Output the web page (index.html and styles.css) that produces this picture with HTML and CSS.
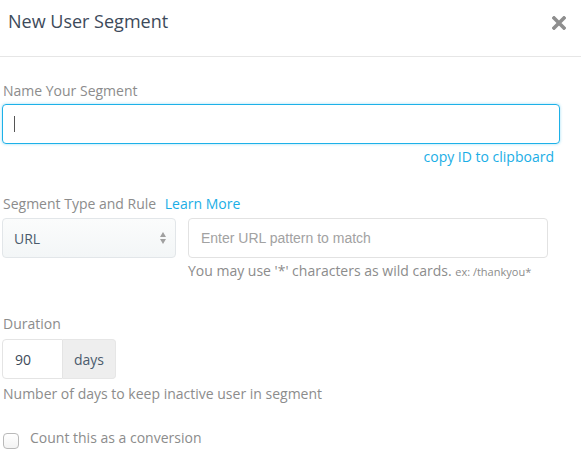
FILE: index.html
```html
<!DOCTYPE html>
<html lang="en">
<head>
<meta charset="utf-8">
<title>New User Segment</title>
<link rel="stylesheet" href="styles.css">
</head>
<body>
<div class="header">
  <h1 class="title">New User Segment</h1>
  <svg class="close" width="14" height="14" viewBox="0 0 14 14" aria-label="Close">
    <path d="M2 2 L12 12 M12 2 L2 12" stroke="#8e8e8e" stroke-width="3.6" stroke-linecap="square"/>
  </svg>
</div>
<div class="content">
  <div class="label">Name Your Segment</div>
  <div class="name-input"><span class="caret"></span></div>
  <div class="copy-row"><span class="link">copy ID to clipboard</span></div>

  <div class="label section">Segment Type and Rule <span class="link learn">Learn More</span></div>
  <div class="rule-row">
    <div class="select">
      <span class="select-value">URL</span>
      <span class="arrows"><span class="up"></span><span class="down"></span></span>
    </div>
    <div class="url-input">Enter URL pattern to match</div>
  </div>
  <div class="hint">You may use '*' characters as wild cards. <span class="ex">ex: /thankyou*</span></div>

  <div class="label duration">Duration</div>
  <div class="input-group">
    <div class="num">90</div>
    <div class="addon">days</div>
  </div>
  <div class="help">Number of days to keep inactive user in segment</div>

  <div class="check-row">
    <span class="checkbox"></span>
    <span class="check-label">Count this as a conversion</span>
  </div>
</div>
</body>
</html>
```
FILE: styles.css
```css
html, body {
  margin: 0;
  padding: 0;
  background: #ffffff;
}
body {
  font-family: "Open Sans", "Liberation Sans", sans-serif;
  color: #8c8c8c;
  width: 581px;
}
.header {
  height: 57px;
  box-sizing: border-box;
  border-bottom: 1px solid #e6e6e6;
  display: flex;
  justify-content: space-between;
  align-items: flex-start;
  padding: 9px 15px 0 8px;
}
.title {
  margin: 0;
  font-size: 18px;
  line-height: 24px;
  font-weight: 400;
  color: #3d4a5a;
}
.close {
  margin-top: 7px;
  display: block;
}
.content {
  padding: 24px 0 0 2px;
  width: 558px;
}
.label {
  font-size: 14px;
  line-height: 20px;
  color: #8c8c8c;
  padding-left: 1px;
  margin-bottom: 3px;
}
.link {
  color: #1aaee6;
}
.learn {
  margin-left: 5px;
}
.name-input {
  height: 40px;
  box-sizing: border-box;
  border: 1px solid #1db1e8;
  border-radius: 4px;
  box-shadow: 0 0 3px rgba(29, 177, 232, 0.45);
  position: relative;
}
.caret {
  position: absolute;
  left: 11px;
  top: 11px;
  width: 1px;
  height: 16px;
  background: #555;
}
.copy-row {
  text-align: right;
  padding-right: 6px;
  margin-top: 3px;
  font-size: 14px;
  line-height: 20px;
}
.section {
  margin-top: 27px;
  margin-bottom: 4px;
}
.rule-row {
  display: flex;
  gap: 12px;
}
.select {
  width: 174px;
  height: 40px;
  box-sizing: border-box;
  border: 1px solid #e2e6e9;
  border-radius: 4px;
  background: linear-gradient(#fbfcfc, #f3f6f7);
  display: flex;
  align-items: center;
  justify-content: space-between;
  padding: 0 9px 0 11px;
}
.select-value {
  font-size: 14px;
  color: #4b5b6c;
}
.arrows {
  display: flex;
  flex-direction: column;
  gap: 2px;
}
.up, .down {
  width: 0;
  height: 0;
  border-left: 3px solid transparent;
  border-right: 3px solid transparent;
}
.up {
  border-bottom: 5px solid #a0a0a0;
}
.down {
  border-top: 5px solid #a0a0a0;
}
.url-input {
  width: 360px;
  height: 40px;
  box-sizing: border-box;
  border: 1px solid #e2e2e2;
  border-radius: 4px;
  padding-left: 12px;
  display: flex;
  align-items: center;
  font-family: "Liberation Sans", Arial, sans-serif;
  font-size: 14px;
  color: #a2a2a2;
}
.hint {
  margin: 3px 0 0 186px;
  font-size: 14px;
  line-height: 20px;
  color: #8c8c8c;
}
.ex {
  font-size: 11px;
}
.duration {
  margin-top: 32px;
  margin-bottom: 5px;
}
.input-group {
  display: flex;
  height: 40px;
}
.num {
  width: 61px;
  box-sizing: border-box;
  border: 1px solid #e4e4e4;
  border-radius: 4px 0 0 4px;
  padding-left: 12px;
  display: flex;
  align-items: center;
  font-size: 14px;
  color: #3d4a5a;
}
.addon {
  width: 53px;
  box-sizing: border-box;
  background: #eeeeee;
  border: 1px solid #e6e6e6;
  border-left: none;
  border-radius: 0 4px 4px 0;
  display: flex;
  align-items: center;
  justify-content: center;
  font-size: 14px;
  color: #4b5b6c;
}
.help {
  margin-top: 5px;
  padding-left: 1px;
  font-size: 14px;
  line-height: 20px;
}
.check-row {
  margin-top: 24px;
  display: flex;
  align-items: flex-start;
  padding-left: 1px;
}
.checkbox {
  width: 16px;
  height: 16px;
  box-sizing: border-box;
  border: 1px solid #b9b9b9;
  border-radius: 4px;
  background: linear-gradient(#ffffff, #f3f3f3);
  margin-top: 5px;
}
.check-label {
  margin-left: 11px;
  font-size: 14px;
  line-height: 20px;
}
```
